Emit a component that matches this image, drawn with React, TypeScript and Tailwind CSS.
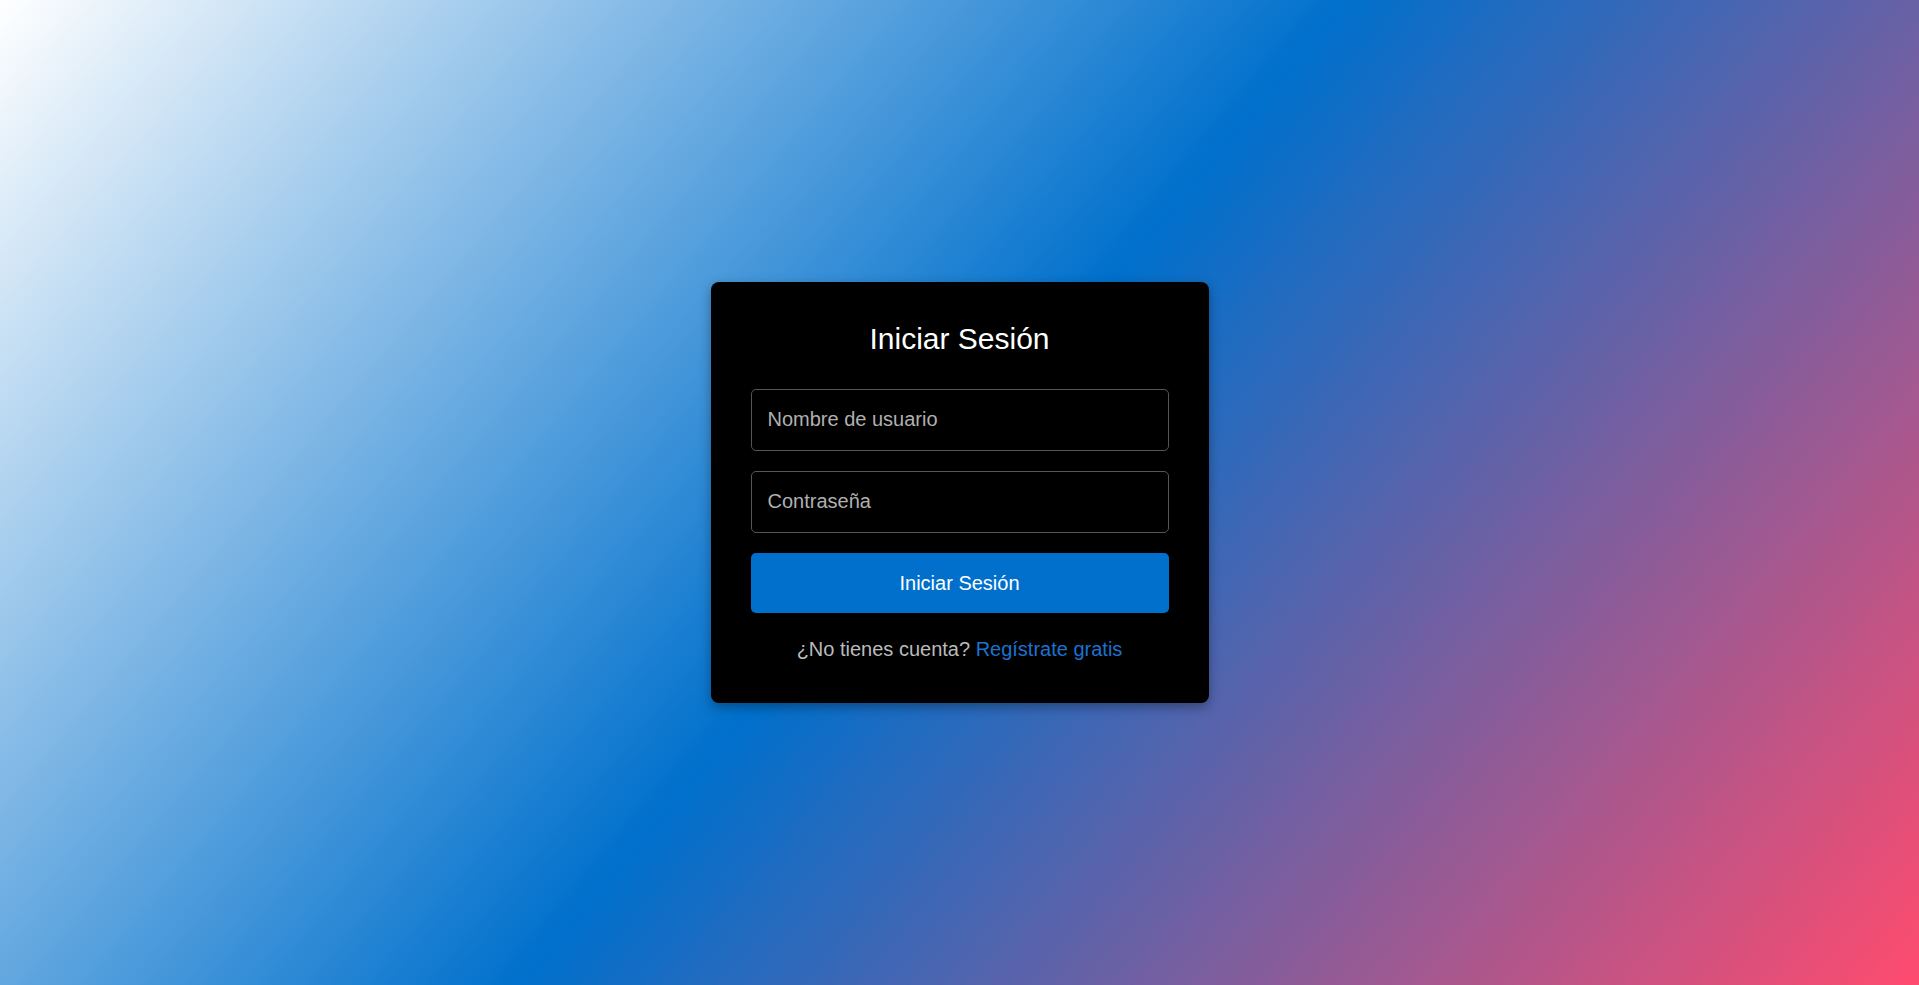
export default function App() {
	return (
		<div
			className="min-h-screen w-full flex items-center justify-center bg-[linear-gradient(130deg,#ffffff_0%,#0070cc_49%,#ff4b6e_100%)]"
			style={{ fontFamily: '"Liberation Sans", Arial, sans-serif' }}
		>
			<div className="w-[498px] bg-black rounded-lg px-10 pt-10 pb-[42px] shadow-[0_4px_12px_rgba(0,0,0,0.35)]">
				<h2 className="text-[30px] leading-[34.5px] text-white text-center mb-[32px]">
					Iniciar Sesión
				</h2>
				<form className="flex flex-col gap-5" onSubmit={(e) => e.preventDefault()}>
					<input
						type="text"
						placeholder="Nombre de usuario"
						className="h-[62px] w-full bg-black border border-[#555] rounded-[5px] px-4 text-[20px] text-white placeholder:text-[#b0b0b0] outline-none"
					/>
					<input
						type="password"
						placeholder="Contraseña"
						className="h-[62px] w-full bg-black border border-[#555] rounded-[5px] px-4 text-[20px] text-white placeholder:text-[#b0b0b0] outline-none"
					/>
					<button
						type="submit"
						className="h-[60px] w-full bg-[#0070cc] rounded-[5px] text-white text-[20px]"
					>
						Iniciar Sesión
					</button>
				</form>
				<p className="mt-[25px] text-center text-[20px] leading-[23px] text-[#bbbbbb]">
					¿No tienes cuenta?{" "}
					<a href="#" className="text-[#1a73d0]">
						Regístrate gratis
					</a>
				</p>
			</div>
		</div>
	);
}
